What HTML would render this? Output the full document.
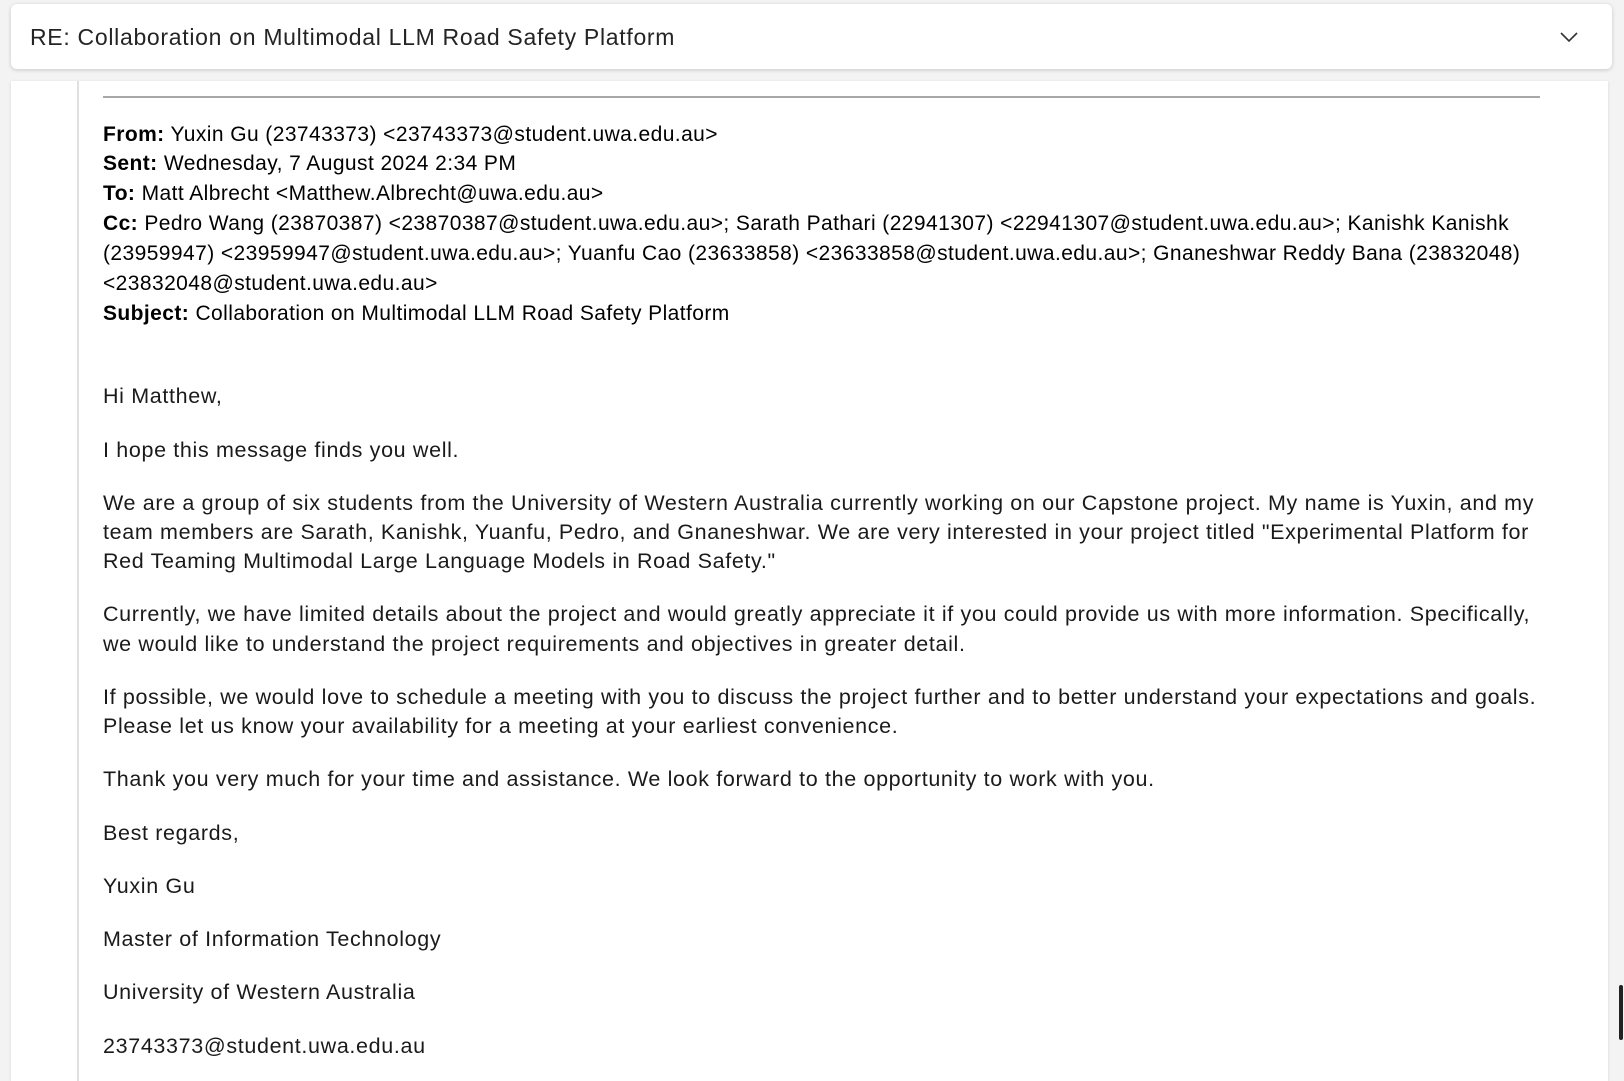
<!DOCTYPE html>
<html><head><meta charset="utf-8"><style>
body{margin:0;width:1624px;height:1066px;background:#f3f3f3;position:relative;overflow:hidden;font-family:"Liberation Sans",Arial,sans-serif;color:#111}
.card{position:absolute;left:11px;top:4px;width:1601px;height:65px;background:#fff;border-radius:6px;box-shadow:0 1px 4px rgba(0,0,0,.18)}
.title{position:absolute;left:30px;top:24px;font-size:23px;color:#242424;white-space:nowrap;letter-spacing:0.7px}
.panel{position:absolute;left:11px;top:81px;width:1597px;height:1000px;background:#fff;box-shadow:0 1px 3px rgba(0,0,0,.12)}
.vl{position:absolute;left:77px;top:81px;width:2px;height:1000px;background:#e1e1e1}
.hr{position:absolute;left:103px;top:96px;width:1437px;height:2px;background:#a8a8a8}
.l{position:absolute;left:103px;white-space:nowrap;line-height:30px}
.h{font-size:21px;color:#000;letter-spacing:0.42px}
.b{font-size:21.5px;color:#1a1a1a;letter-spacing:0.65px}
.sb{position:absolute;left:1619px;top:985px;width:4px;height:55px;background:#222;border-radius:2px}
</style></head><body>
<div class="card"></div>
<div class="title">RE: Collaboration on Multimodal LLM Road Safety Platform</div>
<svg style="position:absolute;left:1559px;top:30px" width="20" height="14" viewBox="0 0 20 14"><path d="M2 3 L10 11 L18 3" fill="none" stroke="#333" stroke-width="1.6"/></svg>
<div class="panel"></div>
<div class="vl"></div>
<div class="hr"></div>
<div class="l h" style="top:120px"><b>From:</b> Yuxin Gu (23743373) &lt;23743373@student.uwa.edu.au&gt;</div>
<div class="l h" style="top:149px"><b>Sent:</b> Wednesday, 7 August 2024 2:34 PM</div>
<div class="l h" style="top:179px"><b>To:</b> Matt Albrecht &lt;Matthew.Albrecht@uwa.edu.au&gt;</div>
<div class="l h" style="top:209px"><b>Cc:</b> Pedro Wang (23870387) &lt;23870387@student.uwa.edu.au&gt;; Sarath Pathari (22941307) &lt;22941307@student.uwa.edu.au&gt;; Kanishk Kanishk</div>
<div class="l h" style="top:239px">(23959947) &lt;23959947@student.uwa.edu.au&gt;; Yuanfu Cao (23633858) &lt;23633858@student.uwa.edu.au&gt;; Gnaneshwar Reddy Bana (23832048)</div>
<div class="l h" style="top:269px">&lt;23832048@student.uwa.edu.au&gt;</div>
<div class="l h" style="top:299px"><b>Subject:</b> Collaboration on Multimodal LLM Road Safety Platform</div>
<div class="l b" style="top:381px">Hi Matthew,</div>
<div class="l b" style="top:435px">I hope this message finds you well.</div>
<div class="l b" style="top:488px">We are a group of six students from the University of Western Australia currently working on our Capstone project. My name is Yuxin, and my</div>
<div class="l b" style="top:517px">team members are Sarath, Kanishk, Yuanfu, Pedro, and Gnaneshwar. We are very interested in your project titled "Experimental Platform for</div>
<div class="l b" style="top:546px">Red Teaming Multimodal Large Language Models in Road Safety."</div>
<div class="l b" style="top:599px">Currently, we have limited details about the project and would greatly appreciate it if you could provide us with more information. Specifically,</div>
<div class="l b" style="top:629px">we would like to understand the project requirements and objectives in greater detail.</div>
<div class="l b" style="top:682px">If possible, we would love to schedule a meeting with you to discuss the project further and to better understand your expectations and goals.</div>
<div class="l b" style="top:711px">Please let us know your availability for a meeting at your earliest convenience.</div>
<div class="l b" style="top:764px">Thank you very much for your time and assistance. We look forward to the opportunity to work with you.</div>
<div class="l b" style="top:818px">Best regards,</div>
<div class="l b" style="top:871px">Yuxin Gu</div>
<div class="l b" style="top:924px">Master of Information Technology</div>
<div class="l b" style="top:977px">University of Western Australia</div>
<div class="l b" style="top:1031px">23743373@student.uwa.edu.au</div>
<div class="sb"></div>
</body></html>
